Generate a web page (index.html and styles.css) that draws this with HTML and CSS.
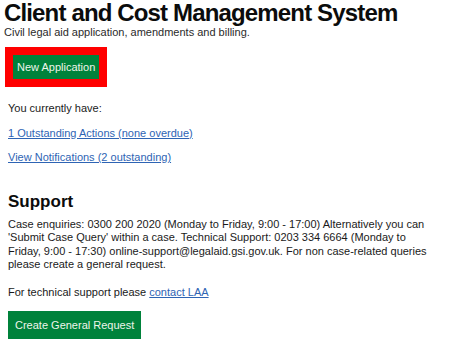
FILE: index.html
```html
<!DOCTYPE html>
<html lang="en">
<head>
  <meta charset="UTF-8">
  <meta name="viewport" content="width=device-width, initial-scale=1">
  <title>Client and Cost Management System</title>
  <link rel="stylesheet" href="styles.css">
</head>
<body>

<div class="page">
  <div class="header">
    <h1 class="title">Client and Cost Management System</h1>
    <p class="subtitle">Civil legal aid application, amendments and billing.</p>
  </div>

  <div class="highlight">
    <a class="button small" href="#">New Application</a>
  </div>

  <div class="content">
    <p>You currently have:</p>
    <p><a href="#">1 Outstanding Actions (none overdue)</a></p>
    <p class="last"><a href="#">View Notifications (2 outstanding)</a></p>

    <h2 class="heading">Support</h2>
    <p class="support">Case enquiries: 0300 200 2020 (Monday to Friday, 9:00 - 17:00) Alternatively you can 'Submit Case Query' within a case. Technical Support: 0203 334 6664 (Monday to Friday, 9:00 - 17:30) online-support@legalaid.gsi.gov.uk. For non case-related queries please create a general request.</p>
    <p>For technical support please <a href="#">contact LAA</a></p>

    <a class="button" href="#">Create General Request</a>
  </div>
</div>

</body>
</html>
```

FILE: styles.css
```css
* {
  box-sizing: border-box;
}

body {
  margin: 0;
  font-family: "Liberation Sans", Arial, sans-serif;
  color: #0b0c0c;
  background-color: #fff;
}

.page {
  width: 440px;
  padding: 0 0 0 4px;
}

.title {
  margin: 0;
  font-size: 24px;
  line-height: 26px;
  font-weight: bold;
  letter-spacing: -0.85px;
  white-space: nowrap;
}

.subtitle {
  margin: 0;
  font-size: 11px;
  line-height: 13px;
  color: #2a2a2a;
}

.highlight {
  display: inline-block;
  margin: 8px 0 0 1px;
  border: 8px solid #ff0000;
}

.button {
  display: inline-block;
  background-color: #00823b;
  color: #eef5ea;
  font-size: 11px;
  line-height: 28px;
  padding: 0 7px 0 7px;
  text-decoration: none;
  box-shadow: 0 1px 0 #4a9a63;
}

.button.small {
  display: block;
  line-height: 24px;
  padding: 0 4px;
  box-shadow: none;
}

.content {
  padding-left: 4px;
  margin-top: 15px;
}

.content p {
  margin: 0 0 11px;
  font-size: 11px;
  line-height: 13.5px;
  color: #1a1a1a;
}

.content p.last {
  margin-bottom: 27px;
}

.content a {
  color: #2e64b4;
}

.content a.button {
  color: #eef5ea;
  margin-top: 1px;
}

.heading {
  margin: 0 0 6px;
  font-size: 17px;
  line-height: 20px;
  font-weight: bold;
}

.content p.support {
  margin-bottom: 14px;
}
```
